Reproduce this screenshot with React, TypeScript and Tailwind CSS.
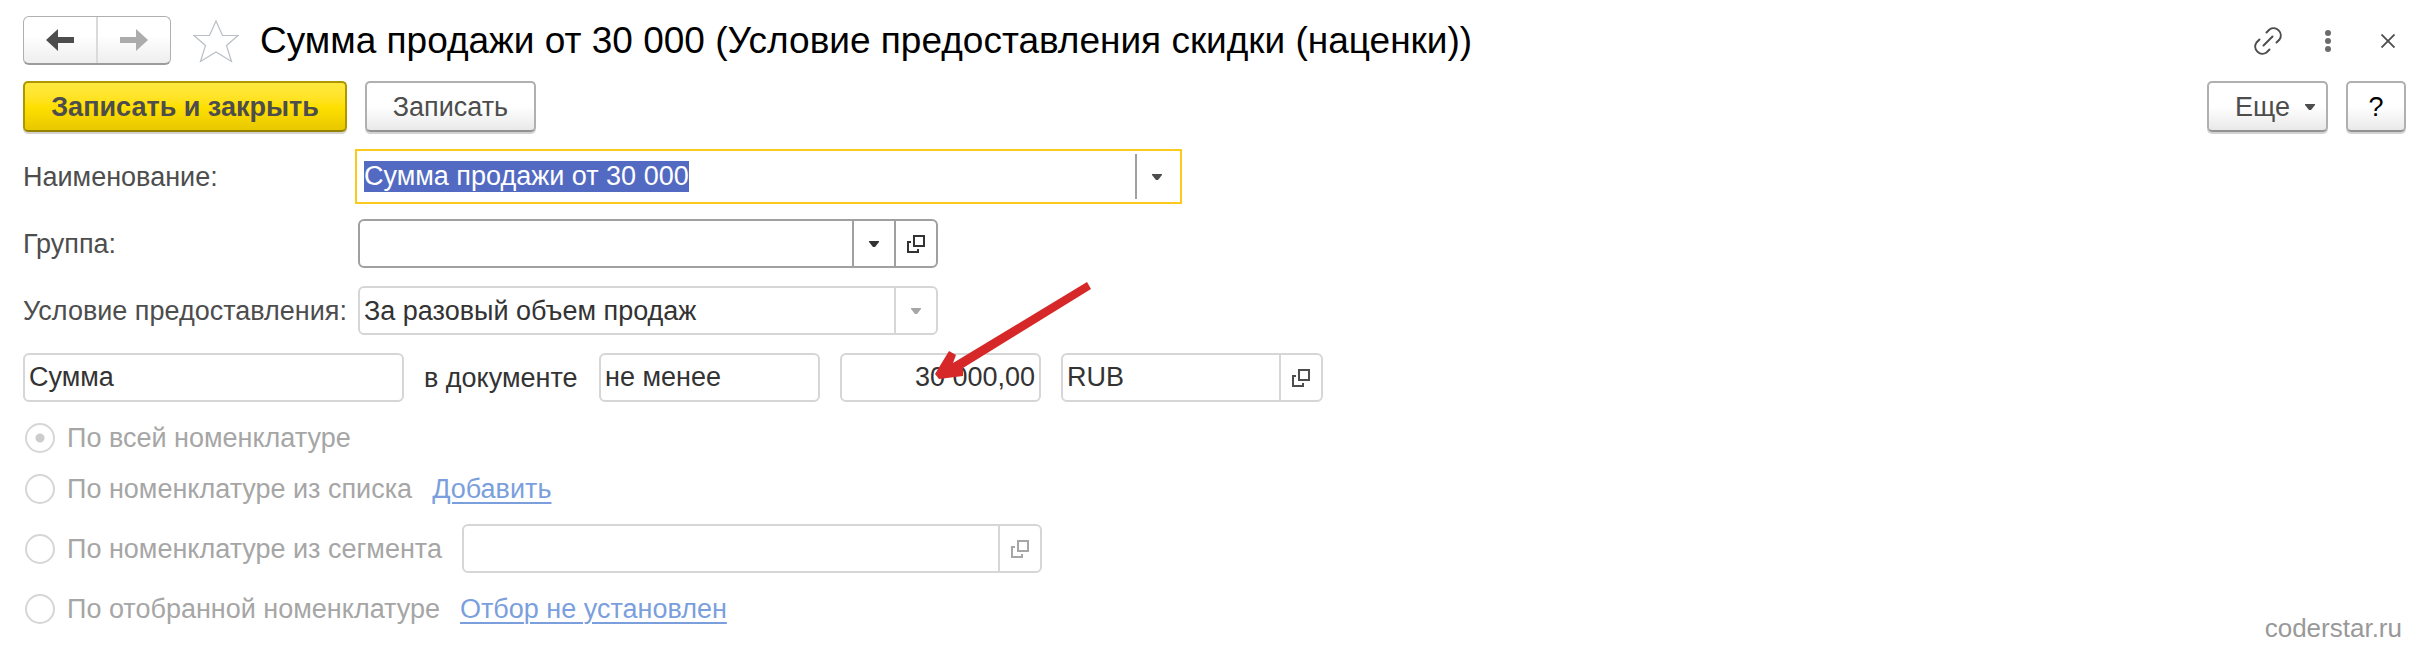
import React, { useEffect, useRef } from 'react';
import clsx from 'clsx';

const grayButton =
  'flex h-[51px] items-center justify-center rounded-[5px] border-2 border-[#b0b0b0] border-b-[#929292] bg-linear-to-b from-white from-50% to-[#e9e9e9] shadow-[0_2px_0_#d2d2d2]';

const inputClass = 'h-full w-full min-w-0 flex-1 bg-transparent px-1 outline-none';

interface FieldProps {
  className?: string;
  muted?: boolean;
  children: React.ReactNode;
}

function Field({ className, muted, children }: FieldProps) {
  return (
    <div
      className={clsx(
        'flex h-[49px] rounded-[6px] border-2 bg-white text-[#333333]',
        muted ? 'border-[#d6d6d6]' : 'border-[#a0a0a0]',
        className
      )}
    >
      {children}
    </div>
  );
}

function CaretIcon() {
  return (
    <svg width="10" height="6" viewBox="0 0 10 6" fill="currentColor" aria-hidden="true">
      <path d="M0 0H10V1L6 6H4L0 1Z" />
    </svg>
  );
}

function OpenIcon() {
  return (
    <svg width="18" height="18" viewBox="0 0 18 18" fill="none" stroke="currentColor" strokeWidth="2" aria-hidden="true">
      <path d="M7 1H17V11H7Z" />
      <path d="M4 7H1V17H11V14" />
    </svg>
  );
}

interface RadioProps {
  label: string;
  checked?: boolean;
}

function Radio({ label, checked = false }: RadioProps) {
  return (
    <label className="flex items-center gap-3 whitespace-nowrap text-[#a6a6a6]">
      <input
        type="radio"
        name="scope"
        disabled
        defaultChecked={checked}
        className="ml-0.5 size-[30px] appearance-none rounded-full border-2 border-[#d6d6d6] checked:bg-[radial-gradient(circle,#cccccc_4px,transparent_5px)]"
      />
      {label}
    </label>
  );
}

export default function App() {
  const nameRef = useRef<HTMLInputElement>(null);

  useEffect(() => {
    nameRef.current?.focus();
    nameRef.current?.select();
  }, []);

  return (
    <main className="bg-white pt-4 pr-5 pl-[23px] font-['Liberation_Sans',Arial,sans-serif] text-[27px] leading-8 text-[#4d4d4d]">
      {/* Header */}
      <header className="flex h-[49px] items-center">
        <div className="flex h-[49px] w-[148px] shrink-0 rounded-[6px] border border-[#b0b0b0] border-b-2 border-b-[#9c9c9c] bg-linear-to-b from-white from-40% to-[#eeeeee]">
          <button aria-label="Назад" className="flex flex-1 items-center justify-center border-r-2 border-[#dadada] text-[#4d4d4d]">
            <svg width="28" height="22" viewBox="0 0 28 22" fill="currentColor">
              <path d="M0 11L12 0V8H28V14H12V22Z" />
            </svg>
          </button>
          <button aria-label="Вперед" className="flex flex-1 items-center justify-center text-[#acacac]">
            <svg width="28" height="22" viewBox="0 0 28 22" fill="currentColor">
              <path d="M28 11L16 0V8H0V14H16V22Z" />
            </svg>
          </button>
        </div>
        <button aria-label="Добавить в избранное" className="ml-[22px] shrink-0">
          <svg width="46" height="44" viewBox="0 0 46 44" fill="none" stroke="#b9bfc5" strokeWidth="1.2">
            <path d="M23 2L29.5 16.5H45L33.5 26.5L38.5 42.5L23 33L7.5 42.5L12.5 26.5L1 16.5H16.5Z" />
          </svg>
        </button>
        <h1 className="ml-[21px] text-[37px] leading-[44px] whitespace-nowrap text-black">
          Сумма продажи от 30 000 (Условие предоставления скидки (наценки))
        </h1>
        <div className="ml-auto flex items-center pr-[11px]">
          <button aria-label="Ссылка">
            <svg width="30" height="30" viewBox="0 0 30 30" fill="none" stroke="#4d4d4d" strokeWidth="2" strokeLinecap="round">
              <path d="M13.5 6.500L16.500 3.500A7.200 7.200 0 0 1 26.500 13.500L23.500 16.500" />
              <path d="M16.500 23.500L13.500 26.500A7.200 7.200 0 0 1 3.500 16.500L6.500 13.500" />
              <path d="M10.500 19.500L19.500 10.500" />
            </svg>
          </button>
          <button aria-label="Меню" className="ml-[42px]">
            <svg width="6" height="22" viewBox="0 0 6 22" fill="#6b6b6b">
              <circle cx="3" cy="3" r="3" />
              <circle cx="3" cy="11" r="3" />
              <circle cx="3" cy="19" r="3" />
            </svg>
          </button>
          <button aria-label="Закрыть" className="ml-[50px]">
            <svg width="14" height="14" viewBox="0 0 14 14" stroke="#4d4d4d" strokeWidth="1.8">
              <path d="M0.500 0.500L13.500 13.500M13.500 0.500L0.500 13.500" />
            </svg>
          </button>
        </div>
      </header>

      {/* Commands */}
      <div className="mt-4 flex">
        <button className="h-[51px] w-[324px] rounded-[5px] border-2 border-[#ae9700] border-b-[#968200] bg-linear-to-b from-[#ffe93f] via-[#ffe000] to-[#e8c800] font-bold shadow-[0_2px_0_#d2d2d2]">
          Записать и закрыть
        </button>
        <button className={clsx(grayButton, 'ml-[18px] w-[171px]')}>Записать</button>
        <button className={clsx(grayButton, 'ml-auto w-[121px] gap-[15px] pl-[15px]')}>
          Еще
          <CaretIcon />
        </button>
        <button className={clsx(grayButton, 'ml-[18px] w-[60px] text-black')}>?</button>
      </div>

      {/* Main fields */}
      <div className="mt-5 grid grid-cols-[324px_1fr] items-center gap-x-[11px] gap-y-[18px]">
        <label htmlFor="name">Наименование:</label>
        <div className="-m-[3px] flex h-[55px] w-[827px] items-center border-2 border-[#fcca1c] bg-white">
          <input
            id="name"
            ref={nameRef}
            defaultValue="Сумма продажи от 30 000"
            className="h-full min-w-0 flex-1 px-[7px] text-[#333333] outline-none selection:bg-[#536ac2] selection:text-white"
          />
          <button aria-label="Выбрать наименование" className="flex h-[45px] w-[45px] items-center border-l-2 border-[#a0a0a0] pl-[15px]">
            <CaretIcon />
          </button>
        </div>

        <label htmlFor="group">Группа:</label>
        <Field className="w-[580px]">
          <input id="group" className={inputClass} />
          <button aria-label="Выбрать группу" className="flex w-[42px] items-center justify-center border-l-2 border-[#a0a0a0]">
            <CaretIcon />
          </button>
          <button aria-label="Открыть группу" className="flex w-[42px] items-center justify-center border-l-2 border-[#a0a0a0]">
            <OpenIcon />
          </button>
        </Field>

        <label htmlFor="condition" className="whitespace-nowrap">Условие предоставления:</label>
        <Field muted className="relative w-[580px]">
          <select id="condition" disabled className="w-full appearance-none px-1 opacity-100">
            <option>За разовый объем продаж</option>
          </select>
          <span className="pointer-events-none absolute inset-y-0 right-0 flex w-[42px] items-center justify-center border-l-2 border-[#d6d6d6] text-[#a6a6a6]">
            <CaretIcon />
          </span>
        </Field>
      </div>

      {/* Amount condition */}
      <div className="mt-[18px] flex items-center gap-5 text-[#333333]">
        <Field muted className="w-[381px]">
          <input aria-label="Показатель" readOnly value="Сумма" className={inputClass} />
        </Field>
        <span className="w-[155px] whitespace-nowrap">в документе</span>
        <Field muted className="w-[221px]">
          <input aria-label="Сравнение" readOnly value="не менее" className={inputClass} />
        </Field>
        <Field muted className="relative w-[201px]">
          <input aria-label="Значение" readOnly value="30 000,00" className={clsx(inputClass, 'text-right')} />
          <svg
            width="158"
            height="99"
            viewBox="0 0 158 99"
            fill="#d62828"
            aria-hidden="true"
            className="pointer-events-none absolute bottom-[20px] left-[92px]"
          >
            <path d="M153 1L157 8L29 87V95L5 98L1 93L15 70L22 74L19 82Z" />
          </svg>
        </Field>
        <Field muted className="w-[262px]">
          <input aria-label="Валюта" readOnly value="RUB" className={inputClass} />
          <button aria-label="Открыть валюту" className="flex w-[42px] items-center justify-center border-l-2 border-[#d6d6d6] text-[#4d4d4d]">
            <OpenIcon />
          </button>
        </Field>
      </div>

      {/* Item scope */}
      <div className="mt-5 flex items-end justify-between">
        <div role="radiogroup" aria-label="Номенклатура" className="flex flex-col gap-5 pb-5">
          <div className="flex h-[31px] items-center">
            <Radio label="По всей номенклатуре" checked />
          </div>
          <div className="flex h-[31px] items-center gap-5">
            <Radio label="По номенклатуре из списка" />
            <a href="#" className="text-[#7b9fdc] underline decoration-2 underline-offset-4">Добавить</a>
          </div>
          <div className="flex items-center gap-5">
            <Radio label="По номенклатуре из сегмента" />
            <Field muted className="w-[580px]">
              <input aria-label="Сегмент" disabled className={inputClass} />
              <button aria-label="Открыть сегмент" disabled className="flex w-[42px] items-center justify-center border-l-2 border-[#d6d6d6] text-[#a6a6a6]">
                <OpenIcon />
              </button>
            </Field>
          </div>
          <div className="flex h-[31px] items-center gap-5">
            <Radio label="По отобранной номенклатуре" />
            <a href="#" className="text-[#7b9fdc] underline decoration-2 underline-offset-4">Отбор не установлен</a>
          </div>
        </div>
        <span className="pr-1 text-[26px] text-[#999999]">coderstar.ru</span>
      </div>
    </main>
  );
}
